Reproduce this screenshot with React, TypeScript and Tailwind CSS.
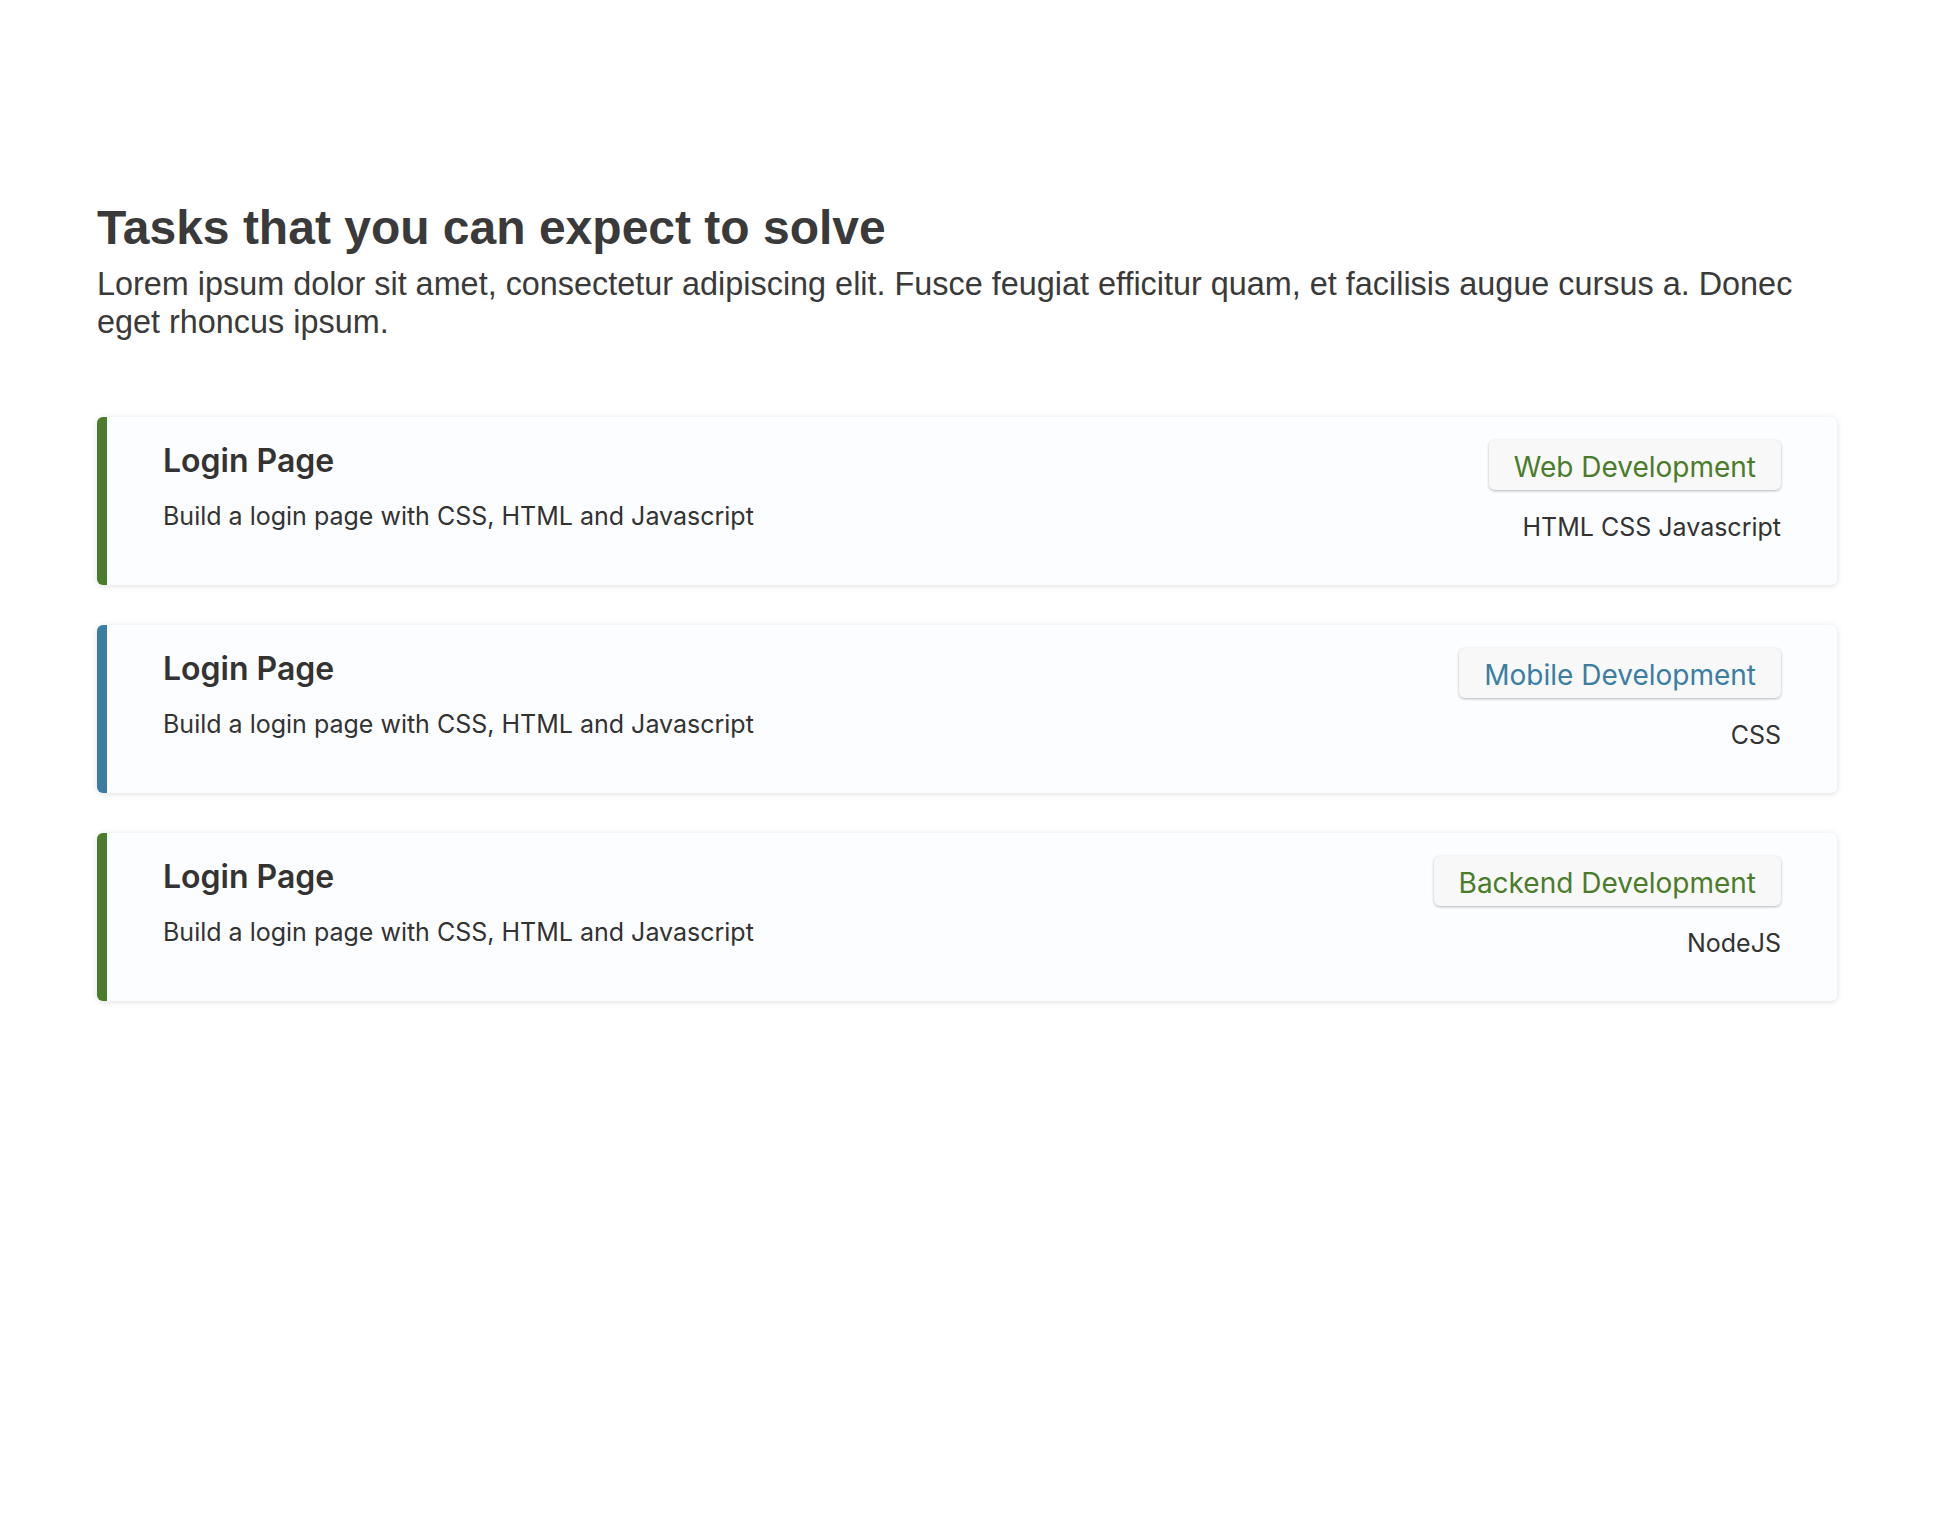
const tasks = [
  {
    title: "Login Page",
    text: "Build a login page with CSS, HTML and Javascript",
    category: "Web Development",
    tags: "HTML CSS Javascript",
    color: "green",
  },
  {
    title: "Login Page",
    text: "Build a login page with CSS, HTML and Javascript",
    category: "Mobile Development",
    tags: "CSS",
    color: "blue",
  },
  {
    title: "Login Page",
    text: "Build a login page with CSS, HTML and Javascript",
    category: "Backend Development",
    tags: "NodeJS",
    color: "green",
  },
];

function TaskCard({ task }: { task: (typeof tasks)[number] }) {
  const green = task.color === "green";
  return (
    <div
      className={`flex justify-between h-[168px] rounded-md bg-[#fcfdfe] border-l-[10px] shadow-[0_1px_6px_rgba(0,0,0,0.13)] pl-[56px] pr-[56px] pt-[23px] ${
        green ? "border-[#4a7c2b]" : "border-[#3b7ea1]"
      }`}
    >
      <div className="flex flex-col pt-[1px]">
        <h3 className="text-[32px] font-semibold leading-[40px] text-[#333]">{task.title}</h3>
        <p className="mt-[19px] text-[25px] leading-[32px] text-[#333]">{task.text}</p>
      </div>
      <div className="flex flex-col items-end">
        <span
          className={`rounded-md bg-[#f8f8f8] shadow-[0_1px_3px_rgba(0,0,0,0.28)] px-[25px] pt-[3px] h-[50px] flex items-center text-[28px] ${
            green ? "text-[#4a7c2b]" : "text-[#3b7ea1]"
          }`}
        >
          {task.category}
        </span>
        <span className="mt-[21px] text-[25px] leading-[32px] text-[#333]">{task.tags}</span>
      </div>
    </div>
  );
}

export default function App() {
  return (
    <div className="min-h-screen bg-white px-[97px] pt-[200px] font-['Inter',sans-serif]">
      <h1 className="font-['Liberation_Sans',Arial,sans-serif] text-[48px] font-bold leading-[56px] text-[#3a3a3a]">
        Tasks that you can expect to solve
      </h1>
      <p className="mt-[9px] font-['Liberation_Sans',Arial,sans-serif] text-[32.4px] leading-[38px] text-[#3a3a3a]">
        Lorem ipsum dolor sit amet, consectetur adipiscing elit. Fusce feugiat efficitur quam, et facilisis augue cursus a. Donec eget rhoncus ipsum.
      </p>
      <div className="mt-[76px] flex flex-col gap-[40px]">
        {tasks.map((t, i) => (
          <TaskCard key={i} task={t} />
        ))}
      </div>
    </div>
  );
}
